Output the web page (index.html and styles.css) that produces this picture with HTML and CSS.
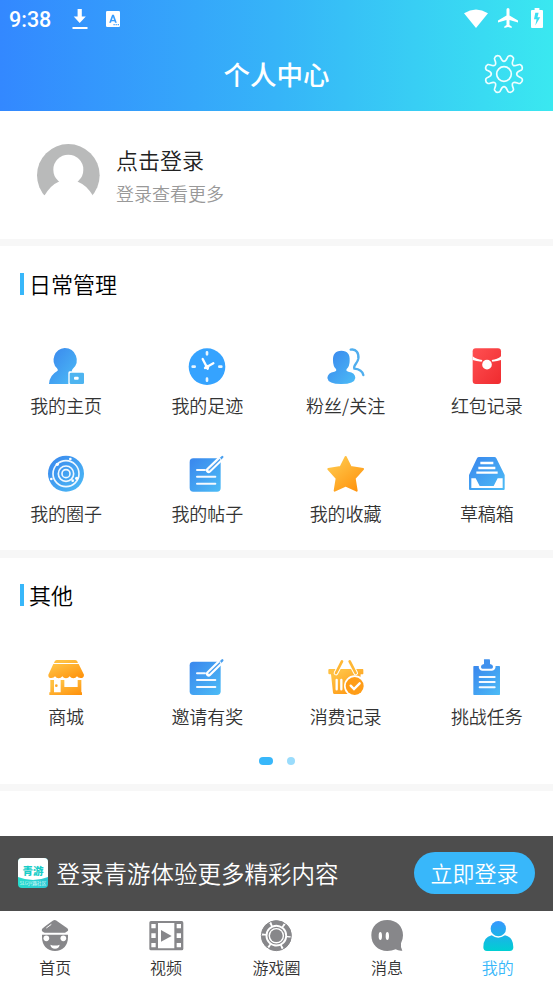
FILE: index.html
```html
<!DOCTYPE html>
<html lang="zh-CN">
<head>
<meta charset="utf-8">
<title>个人中心</title>
<link rel="stylesheet" href="styles.css">
</head>
<body>
<svg class="defs" width="0" height="0">
  <defs>
    <linearGradient id="blue" x1="0" y1="0" x2="1" y2="1"><stop offset="0.1" stop-color="#3b8bee"/><stop offset="1" stop-color="#4cbcf6"/></linearGradient>
    <linearGradient id="gold" x1="0.1" y1="0" x2="0.9" y2="1"><stop offset="0.2" stop-color="#ffc042"/><stop offset="1" stop-color="#ff920c"/></linearGradient>
    <linearGradient id="red" x1="0" y1="0" x2="1" y2="1"><stop offset="0" stop-color="#ff5052"/><stop offset="1" stop-color="#ef2b2f"/></linearGradient>
    <linearGradient id="me" gradientUnits="userSpaceOnUse" x1="0" y1="9" x2="0" y2="99"><stop offset="0" stop-color="#3797ff"/><stop offset="1" stop-color="#00cfd2"/></linearGradient>
    <path id="tooth" d="M0 -38C9 -38 9 -52 14 -54Q23 -58 28.3 -48.1C30.4 -43.1 20.5 -33.2 26.9 -26.9"/>
    <g id="note">
      <rect x="8" y="13" width="93" height="100" rx="11" fill="url(#blue)"/>
      <path d="M65 49L106 9" stroke="#fff" stroke-width="17" stroke-linecap="round"/>
      <path d="M65 49L106 9" stroke="#4a9fee" stroke-width="7" stroke-linecap="round"/>
      <path d="M64 50L98 17" stroke="#fff" stroke-width="10" stroke-linecap="round"/>
      <path d="M66 48L98 17" stroke="#4a9fee" stroke-width="4" stroke-linecap="round"/>
      <path d="M30 48H54M30 68H85M30 89H85" stroke="#f4f9ff" stroke-width="6" stroke-linecap="round"/>
    </g>
  </defs>
</svg>
<div class="screen">
  <header class="header">
    <div class="status">
      <span class="time">9:38</span>
      <svg class="s-down" width="16" height="22" viewBox="0 0 16 22" fill="#fff"><path d="M5.6 1h4.2v7.5h4L7.700 15 1.700 8.500h3.900zM.5 19h15v2H.5z"/></svg>
      <svg class="s-app" width="14" height="16" viewBox="0 0 14 16"><rect width="14" height="16" rx="1.300" fill="#fff"/><path d="M3.200 11.800L6.100 3.800h1.800l2.900 8H9L8.500 10.300H5.500L5 11.800zM6 8.900h2L7 5.900z" fill="#379dfe"/><path d="M7.500 13h1.200v1.200H7.500zM9.600 13h1.200v1.200H9.600zM11.700 13h1.200v1.200h-1.200z" fill="#379dfe"/></svg>
      <span class="grow"></span>
      <svg class="s-wifi" width="24" height="20" viewBox="0 0 24 20"><path d="M0 4.200Q12-3.200 24 4.200L12 19z" fill="#fff"/></svg>
      <svg class="s-plane" width="20" height="21" viewBox="0 0 20 21"><path d="M10 0q1.500 0 1.500 1.600V7.500L20 12.500v2l-8.500-2.600v5l2.200 1.700V20L10 19.100 6.300 20v-1.400l2.200-1.700v-5L0 14.500v-2l8.500-5V1.600Q8.500 0 10 0z" fill="#fff"/></svg>
      <svg class="s-batt" width="12" height="20" viewBox="0 0 12 20"><path d="M3.600 0h4.800v2H11q1 0 1 1v16q0 1-1 1H1q-1 0-1-1V3q0-1 1-1h2.600z" fill="#fff"/><path d="M7.600 4.800H4.300L3 11.300h2.600L4.300 17.500 9.200 9.300H6.500z" fill="#3bdff2"/></svg>
    </div>
    <div class="titlebar">
      <h1>个人中心</h1>
      <svg class="gear" width="40" height="40" viewBox="-60 -60 120 120" fill="none" stroke="#effeff" stroke-width="5">
        <use href="#tooth"/><use href="#tooth" transform="rotate(45)"/><use href="#tooth" transform="rotate(90)"/><use href="#tooth" transform="rotate(135)"/><use href="#tooth" transform="rotate(180)"/><use href="#tooth" transform="rotate(225)"/><use href="#tooth" transform="rotate(270)"/><use href="#tooth" transform="rotate(315)"/>
        <circle r="22"/>
      </svg>
    </div>
  </header>

  <section class="profile">
    <svg class="avatar" width="64" height="64" viewBox="0 0 192 192"><circle cx="94" cy="97" r="94" fill="#b9baba"/><circle cx="94" cy="80" r="45" fill="#fff"/><path d="M23 157Q41 126 65 116Q73 112 67 102H121Q115 112 124 117Q148 126 167 157V192H0V157z" fill="#fff"/></svg>
    <div class="who">
      <div class="name">点击登录</div>
      <div class="hint">登录查看更多</div>
    </div>
  </section>

  <section class="panel daily">
    <h2>日常管理</h2>
    <div class="grid">
      <div class="item">
        <svg viewBox="0 0 120 120"><path d="M56 6a36 36 0 0 1 24 63q-5 5-1 7H71q-4 0-4 5v33H9Q10 88 34 75q4-2-1-8A36 36 0 0 1 56 6z" fill="url(#blue)"/><rect x="71" y="80" width="43" height="34" rx="4" fill="#4eb4f0"/><rect x="84" y="92" width="14" height="9" rx="3" fill="#fff"/></svg>
        <span>我的主页</span>
      </div>
      <div class="item">
        <svg viewBox="0 0 120 120"><circle cx="60" cy="62" r="55" fill="#35a3ff"/><path d="M60 19v6M60 98v6M17 62h6M97 62h6" stroke="#e8f6ff" stroke-width="8" stroke-linecap="round"/><path d="M47 39L62 68M54 66L79 52" stroke="#fff" stroke-width="7" stroke-linecap="round"/><circle cx="60" cy="63" r="7" fill="#fff"/></svg>
        <span>我的足迹</span>
      </div>
      <div class="item">
        <svg viewBox="0 0 120 120"><path d="M46 14C65 14 72 25 71 44Q71 60 62 69Q59 76 67 77Q88 80 88 96Q86 114 46 114T4 96Q5 80 25 77Q33 76 30 69Q21 60 21 44C20 25 28 14 46 14z" fill="url(#blue)"/><path d="M74 11C91 8 99 21 97 38C95 52 81 58 85 68Q108 70 112 87" fill="none" stroke="#50aeee" stroke-width="7" stroke-linecap="round"/></svg>
        <span>粉丝/关注</span>
      </div>
      <div class="item">
        <svg viewBox="0 0 120 120"><rect x="17" y="7" width="85" height="107" rx="9" fill="url(#red)"/><path d="M17 31Q29 41 46 42L44 47Q27 46 17 42zM102 31Q91 41 74 42L76 47Q92 46 102 42z" fill="#fff"/><circle cx="60" cy="56" r="14.500" fill="#fff"/></svg>
        <span>红包记录</span>
      </div>
      <div class="item">
        <svg viewBox="0 0 120 120"><circle cx="60" cy="59" r="54" fill="url(#blue)"/><g fill="none" stroke="#eff8ff"><circle cx="60" cy="59" r="39" stroke-width="5"/><circle cx="60" cy="59" r="23" stroke-width="5"/><circle cx="60" cy="59" r="12" stroke-width="5"/></g><g fill="#fff"><circle cx="73" cy="15" r="4"/><circle cx="34" cy="31" r="5"/><circle cx="16" cy="75" r="4"/><circle cx="92" cy="73" r="5"/><circle cx="80" cy="80" r="4"/></g></svg>
        <span>我的圈子</span>
      </div>
      <div class="item">
        <svg viewBox="0 0 120 120"><use href="#note"/></svg>
        <span>我的帖子</span>
      </div>
      <div class="item">
        <svg viewBox="0 0 120 120"><path d="M59 9L74 39L111 45L86 73L92 110L59 95L26 110L32 73L7 45L44 39z" fill="url(#gold)" stroke="url(#gold)" stroke-width="6" stroke-linejoin="round"/></svg>
        <span>我的收藏</span>
      </div>
      <div class="item">
        <svg viewBox="0 0 120 120"><path d="M36 9H82Q86 9 88 13L113 63V105Q113 108 110 108H9Q6 108 6 105V63L30 13Q32 9 36 9z" fill="url(#blue)"/><path d="M40 27H79M34 42H85M28 56H92" stroke="#fff" stroke-width="7"/><path d="M13 73H26L38 96H80L92 73H107V102H13z" fill="#fff"/></svg>
        <span>草稿箱</span>
      </div>
    </div>
  </section>

  <section class="panel other">
    <h2>其他</h2>
    <div class="grid">
      <div class="item">
        <svg viewBox="0 0 120 120"><path d="M32 6H88Q94 6 96 15H24Q26 6 32 6zM22 18H98L114 50Q114 60 104 60Q96 60 93 55Q89 61 82 61T71 55Q67 61 60 61T49 55Q45 61 38 61T27 55Q24 60 16 60Q6 60 7 50z" fill="url(#gold)"/><path d="M13 66H24V103H44V66H55V87H95V66H106V103H108V111H10V103H13z" fill="url(#gold)"/><circle cx="31" cy="83" r="4" fill="#ffa726"/></svg>
        <span>商城</span>
      </div>
      <div class="item">
        <svg viewBox="0 0 120 120"><use href="#note" y="-2"/></svg>
        <span>邀请有奖</span>
      </div>
      <div class="item">
        <svg viewBox="0 0 120 120"><path d="M10 33H110Q112 33 112 36V47Q112 49 108 49H104L99 108H25Q22 108 21 104L15 49H11Q7 49 7 46V36Q7 33 10 33z" fill="url(#gold)"/><path d="M30 45L48 10M89 45L71 10" stroke="#fff" stroke-width="14" stroke-linecap="round"/><path d="M30 45L48 10M89 45L71 10" stroke="#ffb734" stroke-width="8" stroke-linecap="round"/><path d="M32 66V94M46 66V94" stroke="#fff" stroke-width="7" stroke-linecap="round"/><circle cx="86" cy="84" r="32" fill="#fff"/><circle cx="86" cy="84" r="27" fill="#ff9d18"/><path d="M74 83L84 93L101 76" fill="none" stroke="#fff" stroke-width="7" stroke-linecap="round"/></svg>
        <span>消费记录</span>
      </div>
      <div class="item">
        <svg viewBox="0 0 120 120"><rect x="19" y="24" width="80" height="87" rx="2" fill="url(#blue)"/><path d="M35 22H86Q86 38 75 38H45Q35 38 35 22z" fill="#fff"/><path d="M52 4H67Q69 4 69 8V18Q78 20 78 27Q78 32 73 32H46Q42 32 42 27Q42 20 51 18V8Q50 4 52 4z" fill="#4192ee"/><path d="M38 57H83M38 72H83M38 88H83" stroke="#f4f9ff" stroke-width="6" stroke-linecap="round"/></svg>
        <span>挑战任务</span>
      </div>
    </div>
    <div class="dots"><i class="on"></i><i></i></div>
  </section>

  <section class="rest"></section>

  <div class="banner">
    <svg class="logo" width="30" height="30" viewBox="0 0 30 30"><defs><clipPath id="round"><rect width="30" height="30" rx="4"/></clipPath><linearGradient id="teal" x1="0" x2="1"><stop stop-color="#27dccb"/><stop offset="1" stop-color="#2bc8d5"/></linearGradient></defs><g clip-path="url(#round)"><rect width="30" height="30" fill="url(#teal)"/><path d="M0 0H30V19Q15 25 0 19z" fill="#fff"/></g><text x="15" y="16.500" text-anchor="middle" font-size="10.500" font-weight="900" fill="#19cdc8">青游</text><text x="15" y="27.300" text-anchor="middle" font-size="4.600" fill="#e5ffff">SLG兴趣社区</text></svg>
    <span class="msg">登录青游体验更多精彩内容</span>
    <span class="login">立即登录</span>
  </div>

  <nav class="tabs">
    <div class="tab">
      <svg viewBox="0 0 108 108" fill="#87878a"><path d="M53 6Q57 6 64 12L91 31Q96 37 91 40Q88 43 84 44H23Q12 41 15 33Q17 30 42 12Q49 6 53 6zM15 50H93V58Q93 75 83 87Q71 99 54 99T25 87Q15 75 15 58z"/><path d="M28 30L43 19" stroke="#fff" stroke-width="3"/><g fill="#fff"><circle cx="28" cy="61" r="8.500"/><circle cx="79" cy="61" r="8.500"/><path d="M40 80Q54 85 68 80Q66 92 54 92T40 80z"/></g></svg>
      <span>首页</span>
    </div>
    <div class="tab">
      <svg viewBox="0 0 108 108"><rect x="4" y="9" width="102" height="88" rx="5" fill="#87878a"/><path d="M30 15H79V91H30zM10 18H23V31H10zM10 46H23V60H10zM10 75H23V88H10zM86 18H99V31H86zM86 46H99V60H86zM86 75H99V88H86z" fill="#fff"/><path d="M39 36L71 54L39 71z" fill="#87878a"/></svg>
      <span>视频</span>
    </div>
    <div class="tab">
      <svg viewBox="0 0 108 108" fill="none" stroke="#87878a"><circle cx="55" cy="53" r="45" stroke-width="3"/><circle cx="55" cy="53" r="39" stroke-width="13" stroke-dasharray="34.840 6" transform="rotate(8 55 53)"/><circle cx="55" cy="53" r="25" stroke-width="3.500"/><circle cx="55" cy="53" r="19" fill="#87878a" stroke="none"/></svg>
      <span>游戏圈</span>
    </div>
    <div class="tab">
      <svg viewBox="0 0 108 108"><path d="M55 6C83 6 102 25 102 52Q102 65 96 76Q94 85 100 98Q88 99 80 94Q68 99 55 99C27 99 7 80 7 52S27 6 55 6z" fill="#87878a"/><ellipse cx="34" cy="54" rx="5" ry="12" fill="#fff"/><ellipse cx="55" cy="54" rx="5" ry="12" fill="#fff"/></svg>
      <span>消息</span>
    </div>
    <div class="tab active">
      <svg viewBox="0 0 108 108" fill="url(#me)"><circle cx="55" cy="32" r="23"/><path d="M35 52Q54 66 75 52Q100 57 100 88Q100 99 89 99H21Q10 99 10 88Q10 57 35 52z"/></svg>
      <span>我的</span>
    </div>
  </nav>
</div>
</body>
</html>
```

FILE: styles.css
```css
* { box-sizing: border-box; }
body {
  margin: 0;
  background: #fff;
  color: #333;
  font-family: "Noto Sans CJK SC", sans-serif;
  font-weight: 350;
}
.defs { display: block; height: 0; }
.screen {
  display: flex;
  flex-direction: column;
  width: 553px;
  height: 984px;
  overflow: hidden;
}
svg { display: block; flex: none; }

.header {
  height: 111px;
  flex: none;
  background: linear-gradient(90deg, #3388ff 0%, #36b4f8 50%, #3ae8f0 100%);
  color: #fff;
}
.status {
  display: flex;
  align-items: center;
  height: 38px;
  padding: 0 10px 0 9px;
}
.time {
  width: 63px;
  font: 500 21.500px/38px Roboto, sans-serif;
  padding-top: 1px;
}
.s-down { margin-top: -1px; }
.s-app { margin-left: 18px; }
.grow { flex: 1; }
.s-wifi { margin-top: -1px; }
.s-plane { margin: -2px 0 0 10px; }
.s-batt { margin: -2px 0 0 13px; }
.titlebar {
  display: grid;
  grid-template-columns: 1fr auto 1fr;
  align-items: center;
  height: 72px;
}
h1 {
  grid-column: 2;
  margin: 0;
  font-size: 26.500px;
  line-height: 36px;
  font-weight: 500;
}
.gear { justify-self: end; margin-right: 29px; }

.profile {
  display: flex;
  flex: none;
  height: 135px;
  padding: 32px 0 0 37px;
  border-bottom: 7px solid #f7f7f7;
}
.who { margin: -1px 0 0 15px; }
.name { font-size: 22px; line-height: 34px; color: #222; }
.hint { font-size: 18px; line-height: 34px; color: #999; }

.panel { flex: none; padding-top: 21px; }
.daily { height: 312px; border-bottom: 8px solid #f7f7f7; }
.other { height: 233px; border-bottom: 7px solid #f7f7f7; }
h2 {
  display: flex;
  align-items: center;
  margin: 0 0 0 20px;
  height: 34px;
  color: #000;
  font-size: 22px;
  line-height: 32px;
  font-weight: inherit;
  padding-bottom: 2px;
}
h2::before {
  content: "";
  width: 4px;
  height: 22px;
  margin: 2px 5px 0 0;
  background: #38b7fa;
}
.other h2 { padding-bottom: 4px; }
.grid {
  display: grid;
  grid-template-columns: repeat(4, 1fr);
  grid-auto-rows: 108px;
  margin-top: 45px;
}
.item {
  display: flex;
  flex-direction: column;
  align-items: center;
  font-size: 18px;
  line-height: 26px;
  white-space: nowrap;
}
.item:nth-child(4n+1) { padding-right: 6px; }
.item:nth-child(4n) { padding-left: 6px; }
.item svg { width: 40px; height: 40px; margin-bottom: 6px; fill: none; }
.other .item svg { margin-bottom: 5px; }
.dots {
  display: flex;
  justify-content: center;
  align-items: center;
  gap: 14px;
  height: 8px;
  margin-top: -9px;
}
.dots i { width: 8px; height: 8px; border-radius: 4px; background: #9adcfc; }
.dots .on { width: 14px; background: #38b7fa; }

.rest { flex: 1; }
.banner {
  display: flex;
  align-items: center;
  flex: none;
  height: 75px;
  padding: 0 18px 1px;
  background: #4d4d4d;
  color: #fff;
}
.msg { flex: 1; margin-left: 8.500px; font-size: 23.500px; line-height: 36px; }
.login {
  width: 121px;
  height: 42px;
  border-radius: 21px;
  background: #38b7fa;
  font-size: 22px;
  line-height: 41px;
  text-align: center;
}
.tabs {
  display: grid;
  grid-template-columns: repeat(5, 1fr);
  flex: none;
  height: 73px;
  padding-top: 7px;
  background: #fff;
}
.tab {
  display: flex;
  flex-direction: column;
  align-items: center;
  font-size: 16px;
  line-height: 24px;
}
.tab svg { width: 36px; height: 36px; margin-bottom: 1px; }
.active { color: #38b7fa; }
```
